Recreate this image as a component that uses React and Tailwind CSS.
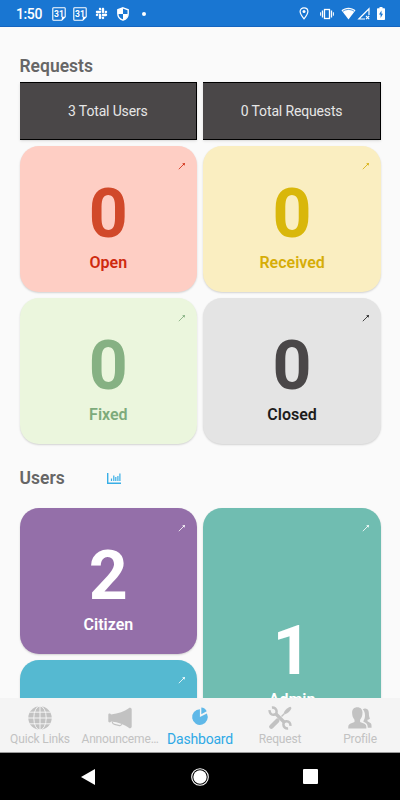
import clsx from 'clsx';
import { FaSlack } from 'react-icons/fa';

const requestCards = [
  { id: 'open', label: 'Open', count: 0, bg: 'bg-[#fecec4]', number: 'text-[#d1492a]', text: 'text-[#cf2a0f]' },
  { id: 'received', label: 'Received', count: 0, bg: 'bg-[#faeec1]', number: 'text-[#d9b70b]', text: 'text-[#d6ad08]' },
  { id: 'fixed', label: 'Fixed', count: 0, bg: 'bg-[#ebf6dd]', number: 'text-[#86b183]', text: 'text-[#7dab7b]' },
  { id: 'closed', label: 'Closed', count: 0, bg: 'bg-[#e4e4e4]', number: 'text-[#4a4748]', text: 'text-[#1c1c1c]' },
];

const tabs = [
  { label: 'Quick Links', icon: GlobeIcon },
  { label: 'Announceme…', icon: MegaphoneIcon },
  { label: 'Dashboard', icon: PieIcon, active: true },
  { label: 'Request', icon: ToolsIcon },
  { label: 'Profile', icon: PeopleIcon },
];

function CalendarIcon() {
  return (
    <svg className="h-[14px] w-[14px]" viewBox="0 0 14 14">
      <path d="M1.6.8h10.8c.5 0 .8.3.8.8v8.2l-3.4 3.4H1.6c-.5 0-.8-.3-.8-.8V1.6c0-.5.3-.8.8-.8z" fill="none" stroke="#fff" strokeWidth="1.1" />
      <path d="M13.2 9.8H9.8v3.4z" fill="#fff" />
      <text x="6.9" y="9.8" textAnchor="middle" fill="#fff" fontSize="8.5" fontWeight="700" fontFamily="Roboto, sans-serif">31</text>
    </svg>
  );
}

function ShieldIcon() {
  return (
    <svg className="h-[14px] w-[12px]" viewBox="0 0 12 14">
      <path d="M6 .8l5.2 2v3.7c0 3.1-2 5.6-5.2 6.7C2.8 12.1.8 9.6.8 6.5V2.8z" fill="none" stroke="#fff" strokeWidth="1.4" />
      <path d="M6 1v6H1V3zM6 7h5c-.3 2.8-2.1 5-5 6z" fill="#fff" />
    </svg>
  );
}

function StatusBar() {
  return (
    <div className="flex h-[27px] shrink-0 items-center border-b border-[#1565c0] bg-[#1976d2] pl-4 pr-[15px] pt-px text-white">
      <span className="w-[36px] text-[14px] font-medium leading-none tracking-[-0.4px]">1:50</span>
      <div className="flex items-center">
        <CalendarIcon />
        <span className="ml-[7px]"><CalendarIcon /></span>
        <FaSlack className="ml-[8px] h-[13px] w-[13px]" />
        <span className="ml-[9px]"><ShieldIcon /></span>
        <span className="ml-[13px] h-[4px] w-[4px] rounded-full bg-white" />
      </div>
      <div className="ml-auto flex items-center">
        <svg className="h-[13px] w-[10px]" viewBox="0 0 10 13">
          <path d="M5 .8c2.3 0 3.9 1.7 3.9 3.8C8.9 7.3 5 11.8 5 11.8S1.1 7.3 1.1 4.6C1.1 2.5 2.7.8 5 .8z" fill="none" stroke="#fff" strokeWidth="1.2" />
          <circle cx="5" cy="4.6" r="1.5" fill="#fff" />
        </svg>
        <svg className="ml-[11px] h-[12px] w-[14px]" viewBox="0 0 14 12" fill="none" stroke="#fff">
          <rect x="4.5" y="1.5" width="5" height="9" strokeWidth="1.3" />
          <path d="M2.5 2.5v7M11.5 2.5v7" strokeWidth="1.3" />
          <path d="M.6 4.3v3.4M13.4 4.3v3.4" strokeWidth="1" />
        </svg>
        <svg className="ml-[7px] h-[13px] w-[15px]" viewBox="0 0 15 13">
          <path d="M.5 3.2C4.5-.2 10.5-.2 14.5 3.2L7.5 12.5z" fill="#fff" />
          <path d="M2 4.2c3.3-2.3 7.7-2.3 11 0" fill="none" stroke="#1976d2" strokeWidth=".8" />
        </svg>
        <svg className="ml-[1px] h-[13px] w-[13px]" viewBox="0 0 13 13" fill="none" stroke="#fff">
          <path d="M12 8V1.8L1.8 12H8" strokeWidth="1.2" />
          <path d="M9 9l3.2 3.2M12.2 9L9 12.2" strokeWidth="1.1" />
        </svg>
        <svg className="ml-[7px] h-[13px] w-[8px]" viewBox="0 0 8 13">
          <path d="M2.5 0h3v1.2H7c.6 0 1 .4 1 1V12c0 .6-.4 1-1 1H1c-.6 0-1-.4-1-1V2.2c0-.6.4-1 1-1h1.5z" fill="#fff" />
          <path d="M4.5 3.5L2 7.6h1.6V11L6 6.8H4.5z" fill="#1976d2" />
        </svg>
      </div>
    </div>
  );
}

function ArrowIcon() {
  return (
    <svg className="absolute right-[11px] top-4 h-[8px] w-[8px]" viewBox="0 0 8 8">
      <path d="M.8 7.2L6 2" stroke="currentColor" strokeWidth=".8" fill="none" />
      <path d="M4.2 1.5L7 1l-.5 2.8z" fill="currentColor" />
    </svg>
  );
}

function TotalBox({ children }) {
  return (
    <div className="flex h-[58px] items-center justify-center border-y border-r border-black bg-[#4a4748] text-[14px] tracking-[-0.15px] text-[#e6e6e6] shadow-sm">
      {children}
    </div>
  );
}

function StatCard({ label, count, bg, number, text, className }) {
  return (
    <div className={clsx('relative flex h-[146px] flex-col items-center rounded-[19px] shadow-[0_1px_2px_rgba(0,0,0,0.16)]', bg, text, className || 'pt-[34px]')}>
      <ArrowIcon />
      {label && (
        <>
          <span className={clsx('text-[68px] font-bold leading-[68px]', number)}>{count}</span>
          <span className="mt-[5px] text-[16px] font-semibold leading-5">{label}</span>
        </>
      )}
    </div>
  );
}

function ChartIcon() {
  return (
    <svg className="h-[11px] w-[14px]" viewBox="0 0 14 11" fill="none" stroke="#38aee6">
      <path d="M.7 0v10.3H14" strokeWidth="1.4" />
      <path d="M4.5 5.5V8M6.800 2.5V8M8.800 4v4M10.900 3v5M12.900.5V8" strokeWidth="1.2" />
    </svg>
  );
}

function GlobeIcon() {
  return (
    <svg className="h-6 w-6" viewBox="0 0 24 24">
      <circle cx="12" cy="12" r="11.7" fill="currentColor" />
      <g fill="none" stroke="#f4f4f4" strokeWidth="1">
        <path d="M12 0v24M0 12h24M1.5 6.2h21M1.5 17.8h21" />
        <ellipse cx="12" cy="12" rx="6.2" ry="12" />
      </g>
    </svg>
  );
}

function MegaphoneIcon() {
  return (
    <svg className="h-6 w-6" viewBox="0 0 24 24">
      <path d="M21.5 1.8c1.4 0 2.2.6 2.2 1.5v17.4c0 .9-.8 1.5-2.2 1.5-.6 0-1-.3-1-.8C16.5 18.6 10.5 16.3 3 15.5c-.2.7-.7.9-1.3.9-.9 0-1.4-.5-1.4-1.4V8.9c0-.9.5-1.3 1.4-1.3.6 0 1.1.3 1.3.9C10.5 7.7 16.5 5.4 20.500 2.600c0-.5.4-.8 1-.8z" fill="currentColor" />
      <path d="M4.2 15.8c.3 1.6 1 2.3 2.3 2.6l5 1.2c1.1.2 1.8-.2 2.2-1.4" fill="none" stroke="currentColor" strokeWidth="1.1" />
    </svg>
  );
}

function PieIcon() {
  return (
    <svg className="h-6 w-6" viewBox="0 0 24 24" fill="#5fb8e8">
      <path d="M11.9 3.3v7.700l7-3.400A7.8 7.8 0 1 1 11.9 3.300z" />
      <path d="M13.300 1.600c2.400.2 4.300 1.400 5.400 3.700l-5.400 2.900z" />
    </svg>
  );
}

function ToolsIcon() {
  return (
    <svg className="h-6 w-6" viewBox="0 0 24 24">
      <g fill="none" stroke="currentColor">
        <path d="M7.5 7.5l9 9" strokeWidth="3.4" />
        <path d="M3.9 1.6c2.7-.2 4.6 1.4 4.7 3.8.1 2.2-1.3 3.5-3.3 3.4-2.3-.1-3.9-2-3.7-4.7" strokeWidth="2.5" />
        <path d="M20.1 22.4c-2.7.2-4.6-1.4-4.7-3.8-.1-2.2 1.3-3.5 3.3-3.4 2.3.1 3.9 2 3.700 4.700" strokeWidth="2.5" />
        <path d="M9.3 14.7l-6 6" strokeWidth="4.4" strokeLinecap="round" />
        <path d="M16.5 7.5l-3 3" strokeWidth="1.5" />
      </g>
      <path d="M22.2.7c.9.3 1.3 1 1.1 1.900-.8 2-2.300 3.600-4.600 5l-1.700.7-1.200-1.200.7-1.800C18 3.100 19.900 1.400 22.200.7z" fill="currentColor" />
    </svg>
  );
}

function PeopleIcon() {
  return (
    <svg className="h-6 w-6" viewBox="0 0 24 24" fill="currentColor">
      <path d="M14.800 3.200c.9-.6 1.700-.8 2.500-.7 2.700.2 3.600 2.400 3.600 5 0 2 .3 3.600 1.100 5-.7.8-1.500 1.200-2.500 1.300v1.500l2.900 1.700c1 .6 1.200 1.700 1.200 4.800h-3.800c-.2-2.900-.8-4.100-2.400-5l-2.200-1.400c1.200-1.800 1.700-3.300 1.800-5.800.1-2.600-.8-5-2.200-6.400z" />
      <path d="M9.300 1.200c3.300 0 5.200 2.200 5.200 5.400 0 3-.9 5.700-2.400 7.100v2.200l4.400 1.900c1.500.7 1.900 1.900 1.900 4.700H.2c0-2.800.4-4 1.900-4.700l4.400-1.900v-2.200C5 12.300 4.100 9.600 4.100 6.600c0-3.200 1.900-5.400 5.200-5.400z" />
    </svg>
  );
}

function TabBar() {
  return (
    <nav className="grid h-[55px] shrink-0 grid-cols-5 border-b border-[#9a9a9a] bg-[#f4f4f4]">
      {tabs.map(({ label, icon: Icon, active }) => (
        <div key={label} className={clsx('flex min-w-0 flex-col items-center pt-[8px]', active ? 'text-[#4fb3e8]' : 'text-[#c2c2c2]')}>
          <Icon />
          <span className={clsx('whitespace-nowrap leading-[19px]', active ? 'text-[14px] tracking-[-0.2px] text-[#2fa9e6]' : 'text-[12px] tracking-[-0.15px]')}>
            {label}
          </span>
        </div>
      ))}
    </nav>
  );
}

function SystemNav() {
  return (
    <div className="flex h-[47px] shrink-0 items-center bg-black pl-[81px] pr-[82px]">
      <svg className="h-4 w-[14px]" viewBox="0 0 14 16"><path d="M14 0v16L0 8z" fill="#fff" /></svg>
      <svg className="ml-[96px] h-[18px] w-[18px]" viewBox="0 0 18 18">
        <circle cx="9" cy="9" r="8.3" fill="none" stroke="#fff" strokeWidth="1.1" />
        <circle cx="9" cy="9" r="6.7" fill="#fff" />
      </svg>
      <span className="ml-auto h-[15px] w-[15px] rounded-[1px] bg-white" />
    </div>
  );
}

export default function App() {
  return (
    <div className="flex h-[800px] w-[400px] flex-col overflow-hidden bg-[#fafafa] font-['Roboto',sans-serif]">
      <StatusBar />

      <main className="min-h-0 flex-1 overflow-hidden pl-[19.5px] pr-[19px]">
        <h2 className="mt-[28px] text-[17.5px] font-semibold leading-[22px] text-[#666]">Requests</h2>
        <div className="mt-[5px] grid grid-cols-2 gap-[6px]">
          <TotalBox>3 Total Users</TotalBox>
          <TotalBox>0 Total Requests</TotalBox>
          {requestCards.map(card => (
            <StatCard key={card.id} {...card} />
          ))}
        </div>

        <div className="mt-[23px] flex items-center">
          <h2 className="w-[87px] text-[17.5px] font-semibold leading-[22px] text-[#666]">Users</h2>
          <ChartIcon />
        </div>
        <div className="mt-[19px] grid grid-cols-2 gap-[6px]">
          <StatCard label="Citizen" count={2} bg="bg-[#946fa9]" text="text-white" />
          <StatCard label="Admin" count={1} bg="bg-[#70bdb1]" text="text-white" className="row-span-2 h-[298px] pt-[109px]" />
          <StatCard bg="bg-[#55b9d1]" text="text-white" />
        </div>
      </main>

      <TabBar />
      <SystemNav />
    </div>
  );
}
